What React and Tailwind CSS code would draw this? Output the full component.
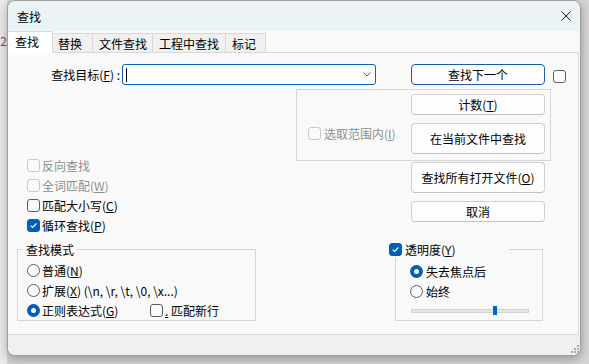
import React from "react";

const U = ({ c }) => <span className="underline underline-offset-[1px] decoration-[1px]">{c}</span>;

function Check({ checked, disabled }) {
  const cls = checked
    ? "bg-[#005fb8] border border-[#005fb8]"
    : disabled
    ? "bg-[#fbfbfb] border border-[#c9c9c9]"
    : "bg-[#fbfbfb] border border-[#5e5e5e]";
  return (
    <span className={`w-[13px] h-[13px] rounded-[3px] shrink-0 flex items-center justify-center ${cls}`}>
      {checked && (
        <svg width="9" height="9" viewBox="0 0 9 9">
          <path d="M1.6 4.7 L3.6 6.5 L7.4 2.5" stroke="white" strokeWidth="1.1" fill="none" />
        </svg>
      )}
    </span>
  );
}

function Radio({ on }) {
  return on ? (
    <span className="w-[13px] h-[13px] rounded-full shrink-0 bg-[#005fb8] flex items-center justify-center">
      <span className="w-[5px] h-[5px] rounded-full bg-white" />
    </span>
  ) : (
    <span className="w-[13px] h-[13px] rounded-full shrink-0 border border-[#5e5e5e] bg-[#fbfbfb]" />
  );
}

function Btn({ children, tall, def }) {
  return (
    <div
      className={`w-[134px] ${tall ? "h-[31px]" : "h-[21px]"} rounded-[4px] border ${
        def ? "border-[#1a5da6]" : "border-[#d0d0d0] border-b-[#c2c2c2]"
      } bg-[#fdfdfd] flex items-center justify-center shrink-0`}
    >
      {children}
    </div>
  );
}

export default function App() {
  return (
    <div className="w-[589px] h-[364px] bg-[#d4d4d4] flex font-['Noto_Sans_CJK_SC',sans-serif] text-[12px] leading-[17px] text-black overflow-hidden">
      <div className="w-[7px] h-full bg-[#e9e9e9] overflow-hidden flex flex-col shrink-0">
        <div className="h-[32px] shrink-0" />
        <div className="flex justify-end text-[#b03a3a]">1.2</div>
      </div>

      <div className="w-[574px] h-[356px] shrink-0 border border-[#9d9d9d] rounded-[8px] overflow-hidden flex flex-col bg-[#f9f9f9] shadow-[0_3px_10px_rgba(0,0,0,0.3)]">
        {/* title bar */}
        <div className="h-[30px] shrink-0 bg-[#ecf3f7] flex items-center justify-between pl-[9px] pr-[9px]">
          <span>查找</span>
          <svg width="10" height="10" viewBox="0 0 10 10">
            <path d="M0.5 0.5 L9.5 9.5 M9.5 0.5 L0.5 9.5" stroke="#1a1a1a" strokeWidth="1" />
          </svg>
        </div>

        {/* tabs */}
        <div className="h-[21px] shrink-0 flex items-end">
          <div className="relative z-10 w-[45px] h-[22px] -mb-[1px] bg-white border-t border-r border-[#d9d9d9] pl-[7px] pb-[2px] flex items-center">
            查找
          </div>
          <div className="w-[40px] h-[19px] bg-[#f0f0f0] border-t border-r border-[#d9d9d9] pl-[5px] flex items-center">替换</div>
          <div className="w-[60px] h-[19px] bg-[#f0f0f0] border-t border-r border-[#d9d9d9] pl-[6px] flex items-center">文件查找</div>
          <div className="w-[73px] h-[19px] bg-[#f0f0f0] border-t border-r border-[#d9d9d9] pl-[6px] flex items-center">工程中查找</div>
          <div className="w-[40px] h-[19px] bg-[#f0f0f0] border-t border-r border-[#d9d9d9] pl-[6px] flex items-center">标记</div>
        </div>

        {/* panel */}
        <div className="w-[571px] h-[283px] shrink-0 border-t border-r border-b border-[#d9d9d9] bg-[#f9f9f9] flex flex-col">
          <div className="mt-[11px] h-[21px] flex items-center">
            <div className="w-[112px] text-right">
              查找目标(<U c="F" />) :
            </div>
            <div className="ml-[2px] w-[254px] h-[21px] rounded-[3px] border border-[#0a64b8] bg-white flex items-center justify-between">
              <span className="ml-[3px] w-[1px] h-[14px] bg-black" />
              <svg className="mr-[4px]" width="8" height="5" viewBox="0 0 8 5">
                <polyline points="0.5,0.5 4,4 7.5,0.5" stroke="#5a5a5a" strokeWidth="1" fill="none" />
              </svg>
            </div>
            <div className="ml-[35px]">
              <Btn def>查找下一个</Btn>
            </div>
            <div className="ml-[8px] mt-[3px]">
              <Check />
            </div>
          </div>

          <div className="mt-[4px] flex">
            {/* left column */}
            <div className="w-[288px] shrink-0 flex flex-col">
              <div className="mt-[66px] h-[20px] flex items-center pl-[19px] gap-[2px] text-[#8f8f8f]">
                <Check disabled />
                <span>反向查找</span>
              </div>
              <div className="h-[20px] flex items-center pl-[19px] gap-[2px] text-[#8f8f8f]">
                <Check disabled />
                <span>
                  全词匹配(<U c="W" />)
                </span>
              </div>
              <div className="h-[20px] flex items-center pl-[19px] gap-[2px]">
                <Check />
                <span>
                  匹配大小写(<U c="C" />)
                </span>
              </div>
              <div className="h-[20px] flex items-center pl-[19px] gap-[2px]">
                <Check checked />
                <span>
                  循环查找(<U c="P" />)
                </span>
              </div>

              <fieldset className="mt-[6px] ml-[9px] w-[239px] border border-[#d6d6d6] pt-[2px]">
                <legend className="ml-[5px] px-[3px] leading-[17px]">查找模式</legend>
                <div className="h-[20px] flex items-center pl-[9px] gap-[2px]">
                  <Radio />
                  <span>
                    普通(<U c="N" />)
                  </span>
                </div>
                <div className="h-[20px] flex items-center pl-[9px] gap-[2px]">
                  <Radio />
                  <span>
                    扩展(<U c="X" />) (\n, \r, \t, \0, \x...)
                  </span>
                </div>
                <div className="h-[20px] flex items-center pl-[9px] gap-[2px]">
                  <Radio on />
                  <span className="w-[106px]">
                    正则表达式(<U c="G" />)
                  </span>
                  <Check />
                  <span>
                    <U c="." /> 匹配新行
                  </span>
                </div>
              </fieldset>
            </div>

            {/* right column */}
            <div className="flex flex-col">
              <div className="w-[255px] h-[72px] border border-[#d6d6d6] flex">
                <div className="w-[114px] shrink-0 pl-[11px] pt-[37px]">
                  <div className="h-[13px] flex items-center gap-[3px] text-[#8f8f8f]">
                    <Check disabled />
                    <span>
                      选取范围内(<U c="I" />)
                    </span>
                  </div>
                </div>
                <div className="flex flex-col pt-[4px] gap-[8px]">
                  <Btn>
                    计数(<U c="T" />)
                  </Btn>
                  <Btn tall>在当前文件中查找</Btn>
                </div>
              </div>
              <div className="ml-[115px] mt-[1px]">
                <Btn tall>
                  查找所有打开文件(<U c="O" />)
                </Btn>
              </div>
              <div className="ml-[115px] mt-[8px]">
                <Btn>取消</Btn>
              </div>

              <fieldset className="mt-[19px] ml-[99px] w-[148px] border border-[#d6d6d6] pt-[3px]">
                <legend className="-ml-[7px] w-[120px] leading-[17px]">
                  <span className="flex items-center gap-[3px] h-[17px]">
                    <Check checked />
                    <span>
                      透明度(<U c="Y" />)
                    </span>
                  </span>
                </legend>
                <div className="h-[20px] flex items-center pl-[14px] gap-[3px]">
                  <Radio on />
                  <span>失去焦点后</span>
                </div>
                <div className="h-[20px] flex items-center pl-[14px] gap-[3px]">
                  <Radio />
                  <span>始终</span>
                </div>
                <div className="h-[19px] flex items-center pl-[15px]">
                  <div className="relative w-[118px] h-[4px] bg-[#e6e6e6] border border-[#d2d2d2]">
                    <div className="absolute left-[81px] top-[-4px] w-[4px] h-[9px] bg-[#0067c0]" />
                  </div>
                </div>
              </fieldset>
            </div>
          </div>
        </div>

        {/* bottom strip */}
        <div className="flex-1 bg-[#f0f0f0] flex justify-end items-end pb-[1px]">
          <svg width="9" height="9" viewBox="0 0 9 9">
            <rect x="6" y="0" width="2" height="2" fill="#a9a9a9" />
            <rect x="3" y="3" width="2" height="2" fill="#a9a9a9" />
            <rect x="6" y="3" width="2" height="2" fill="#a9a9a9" />
            <rect x="0" y="6" width="2" height="2" fill="#a9a9a9" />
            <rect x="3" y="6" width="2" height="2" fill="#a9a9a9" />
            <rect x="6" y="6" width="2" height="2" fill="#a9a9a9" />
          </svg>
        </div>
      </div>

      <div className="flex-1" />
    </div>
  );
}
